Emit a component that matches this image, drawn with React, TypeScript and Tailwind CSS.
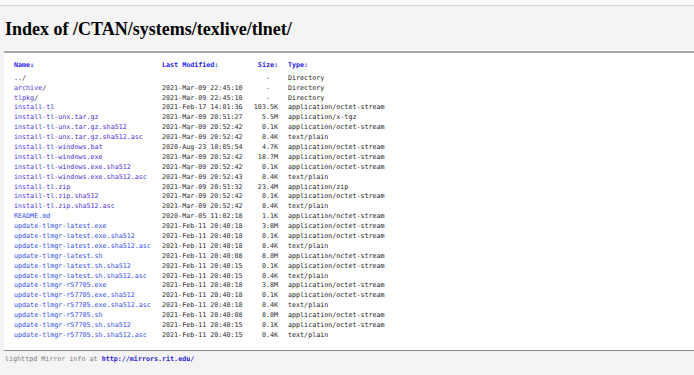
import React from "react";

type Row = { name: string; slash?: boolean; plain?: boolean; date: string; size: string; type: string; c?: string };

const P = "text-[#4a2fe0]";
const B = "text-[#2f4cf0]";

const rows: Row[] = [
  { name: "../", plain: true, date: "", size: "-\u00a0\u00a0", type: "Directory" },
  { name: "archive", slash: true, date: "2021-Mar-09 22:45:10", size: "-\u00a0\u00a0", type: "Directory", c: P },
  { name: "tlpkg", slash: true, date: "2021-Mar-09 22:45:10", size: "-\u00a0\u00a0", type: "Directory", c: P },
  { name: "install-tl", date: "2021-Feb-17 14:01:36", size: "103.5K", type: "application/octet-stream", c: P },
  { name: "install-tl-unx.tar.gz", date: "2021-Mar-09 20:51:27", size: "5.5M", type: "application/x-tgz", c: P },
  { name: "install-tl-unx.tar.gz.sha512", date: "2021-Mar-09 20:52:42", size: "0.1K", type: "application/octet-stream", c: P },
  { name: "install-tl-unx.tar.gz.sha512.asc", date: "2021-Mar-09 20:52:42", size: "0.4K", type: "text/plain", c: P },
  { name: "install-tl-windows.bat", date: "2020-Aug-23 10:05:54", size: "4.7K", type: "application/octet-stream", c: P },
  { name: "install-tl-windows.exe", date: "2021-Mar-09 20:52:42", size: "18.7M", type: "application/octet-stream", c: P },
  { name: "install-tl-windows.exe.sha512", date: "2021-Mar-09 20:52:42", size: "0.1K", type: "application/octet-stream", c: P },
  { name: "install-tl-windows.exe.sha512.asc", date: "2021-Mar-09 20:52:43", size: "0.4K", type: "text/plain", c: P },
  { name: "install-tl.zip", date: "2021-Mar-09 20:51:32", size: "23.4M", type: "application/zip", c: P },
  { name: "install-tl.zip.sha512", date: "2021-Mar-09 20:52:42", size: "0.1K", type: "application/octet-stream", c: P },
  { name: "install-tl.zip.sha512.asc", date: "2021-Mar-09 20:52:42", size: "0.4K", type: "text/plain", c: P },
  { name: "README.md", date: "2020-Mar-05 11:02:18", size: "1.1K", type: "application/octet-stream", c: B },
  { name: "update-tlmgr-latest.exe", date: "2021-Feb-11 20:40:18", size: "3.8M", type: "application/octet-stream", c: B },
  { name: "update-tlmgr-latest.exe.sha512", date: "2021-Feb-11 20:40:18", size: "0.1K", type: "application/octet-stream", c: B },
  { name: "update-tlmgr-latest.exe.sha512.asc", date: "2021-Feb-11 20:40:18", size: "0.4K", type: "text/plain", c: B },
  { name: "update-tlmgr-latest.sh", date: "2021-Feb-11 20:40:08", size: "8.0M", type: "application/octet-stream", c: B },
  { name: "update-tlmgr-latest.sh.sha512", date: "2021-Feb-11 20:40:15", size: "0.1K", type: "application/octet-stream", c: B },
  { name: "update-tlmgr-latest.sh.sha512.asc", date: "2021-Feb-11 20:40:15", size: "0.4K", type: "text/plain", c: B },
  { name: "update-tlmgr-r57705.exe", date: "2021-Feb-11 20:40:18", size: "3.8M", type: "application/octet-stream", c: B },
  { name: "update-tlmgr-r57705.exe.sha512", date: "2021-Feb-11 20:40:18", size: "0.1K", type: "application/octet-stream", c: B },
  { name: "update-tlmgr-r57705.exe.sha512.asc", date: "2021-Feb-11 20:40:18", size: "0.4K", type: "text/plain", c: B },
  { name: "update-tlmgr-r57705.sh", date: "2021-Feb-11 20:40:08", size: "8.0M", type: "application/octet-stream", c: B },
  { name: "update-tlmgr-r57705.sh.sha512", date: "2021-Feb-11 20:40:15", size: "0.1K", type: "application/octet-stream", c: B },
  { name: "update-tlmgr-r57705.sh.sha512.asc", date: "2021-Feb-11 20:40:15", size: "0.4K", type: "text/plain", c: B },
];

const mono = "font-['DejaVu_Sans_Mono',monospace] text-[6.7px]";

export default function App() {
  return (
    <div className="w-[694px] h-[375px] overflow-hidden bg-[#f4f4f4]">
      <div className="h-[6px] bg-[#f7f8fa] border-b border-[#d9d9d9]" />
      <h2 className="mt-[13px] ml-[5px] font-['Liberation_Serif',serif] font-bold text-[18px] leading-[20px] text-black">
        Index of /CTAN/systems/texlive/tlnet/
      </h2>
      <div className="mt-[11px] ml-[4px] border-t border-white">
        <div className="bg-white border-t-2 border-[#a5a5a5] border-b border-b-[#8c8c8c] pt-[7px] pb-[10px] pl-[10px]">
          <div className={`${mono} text-[#222]`}>
            <div className="flex h-[12.8px] pb-[2.9px] items-center font-bold text-[#1c1cf0]">
              <div className="w-[148px]">Name↓</div>
              <div className="w-[91px]">Last Modified:</div>
              <div className="w-[25px] text-right">Size:</div>
              <div className="pl-[10px]">Type:</div>
            </div>
            {rows.map((r) => (
              <div key={r.name} className="flex h-[9.9px] items-center whitespace-pre">
                <div className="w-[148px]">
                  {r.plain ? (
                    <span className="text-[#333]">{r.name}</span>
                  ) : (
                    <>
                      <span className={r.c}>{r.name}</span>
                      {r.slash && <span className="text-[#222]">/</span>}
                    </>
                  )}
                </div>
                <div className="w-[91px] text-[#2a2a2a]">{r.date}</div>
                <div className="w-[25px] text-right text-[#2a2a2a]">{r.size}</div>
                <div className="pl-[10px] text-[#222]">{r.type}</div>
              </div>
            ))}
          </div>
        </div>
      </div>
      <div className={`${mono} pt-[3px] pl-[5px] leading-[10px] text-[#7a7a7a] whitespace-pre`}>
        lighttpd Mirror info at <span className="text-[#2a1ad8] font-bold">http://mirrors.rit.edu/</span>
      </div>
    </div>
  );
}
